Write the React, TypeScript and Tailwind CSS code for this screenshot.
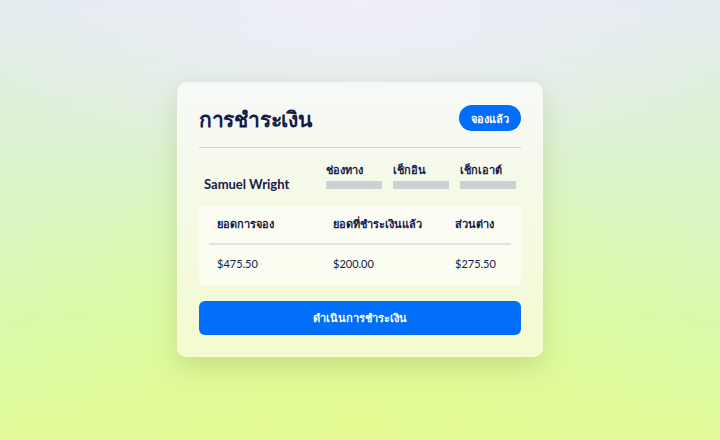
import React from "react";

const font = { fontFamily: 'Lato, "Noto Sans", "DejaVu Sans", sans-serif' };

export default function App() {
  return (
    <div
      className="w-[720px] h-[440px] overflow-hidden flex items-start justify-center pt-[82px]"
      style={{
        ...font,
        background:
          "radial-gradient(ellipse 60% 40% at 50% 0%, #efeefa 0%, rgba(239,238,250,0) 100%), radial-gradient(ellipse 70% 60% at 50% 95%, #e4fb92 0%, rgba(228,251,146,0) 100%), linear-gradient(180deg, #e2ebee 0%, #dcf5c6 45%, #d6fab0 75%, #e2fb9c 100%)",
      }}
    >
      <div className="w-[366px] rounded-[10px] bg-gradient-to-b from-[#f7f9f8] to-[#f3fbce] shadow-[0_10px_24px_rgba(120,140,60,0.25),inset_0_-2px_0_#fafcdc] px-[22px] pt-[22px] pb-[22px] text-[#151a48]">
        <div className="flex items-center justify-between h-[28px]">
          <h1 className="text-[21px] font-bold leading-none tracking-[-0.3px]">การชำระเงิน</h1>
          <button className="h-[26px] px-[12px] rounded-full bg-[#006ef8] text-white text-[11px] font-bold leading-none">
            จองแล้ว
          </button>
        </div>
        <div className="mt-[15px] h-px bg-[#cdd5dc]" />

        <div className="flex items-start mt-[15px] h-[28px]">
          <div className="w-[127px] pl-[5px] mt-[13px] text-[13px] leading-[16px] font-bold">Samuel Wright</div>
          <div className="flex gap-[11px]">
            {["ช่องทาง", "เช็กอิน", "เช็กเอาต์"].map((label) => (
              <div key={label} className="w-[56px] flex flex-col">
                <span className="text-[11px] font-bold leading-[14px]">{label}</span>
                <span className="mt-[4px] h-[8px] bg-[#ccd1d3]" />
              </div>
            ))}
          </div>
        </div>

        <div className="mt-[15px] bg-white/60 h-[79px] px-[10px] flex flex-col">
          <div className="grid grid-cols-[116px_122px_1fr] pl-[8px] h-[37px] items-center text-[11px] font-bold">
            <span>ยอดการจอง</span>
            <span>ยอดที่ชำระเงินแล้ว</span>
            <span>ส่วนต่าง</span>
          </div>
          <div className="h-[2px] bg-[#dfe5e6]" />
          <div className="grid grid-cols-[116px_122px_1fr] pl-[8px] h-[40px] pb-[2px] items-center text-[11px]">
            <span>$475.50</span>
            <span>$200.00</span>
            <span>$275.50</span>
          </div>
        </div>

        <button className="mt-[16px] w-full h-[34px] rounded-[6px] bg-[#006ef8] text-white text-[11px] font-bold">
          ดำเนินการชำระเงิน
        </button>
      </div>
    </div>
  );
}
